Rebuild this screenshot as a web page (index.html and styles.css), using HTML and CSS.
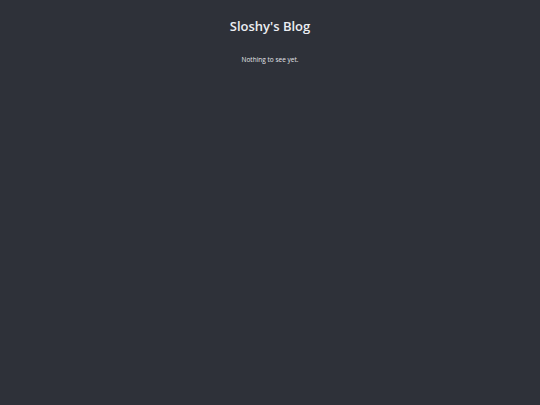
FILE: index.html
```html
<!DOCTYPE html>
<html>
<head>
<meta charset="utf-8">
<link rel="stylesheet" href="styles.css">
</head>
<body>
<main class="page">
  <h1 class="title">Sloshy's Blog</h1>
  <p class="empty">Nothing to see yet.</p>
</main>
</body>
</html>
```
FILE: styles.css
```css
html, body {
  margin: 0;
  padding: 0;
  background: #2e3139;
  height: 100%;
}
.page {
  display: flex;
  flex-direction: column;
  align-items: center;
  padding-top: 16px;
  font-family: "Open Sans", "Noto Sans", sans-serif;
  color: #eceef2;
}
.title {
  margin: 0;
  font-size: 13px;
  font-weight: 600;
  line-height: 20px;
}
.empty {
  margin: 19px 0 0;
  font-size: 6.5px;
  line-height: 10px;
  color: #e3e5ea;
}
```
